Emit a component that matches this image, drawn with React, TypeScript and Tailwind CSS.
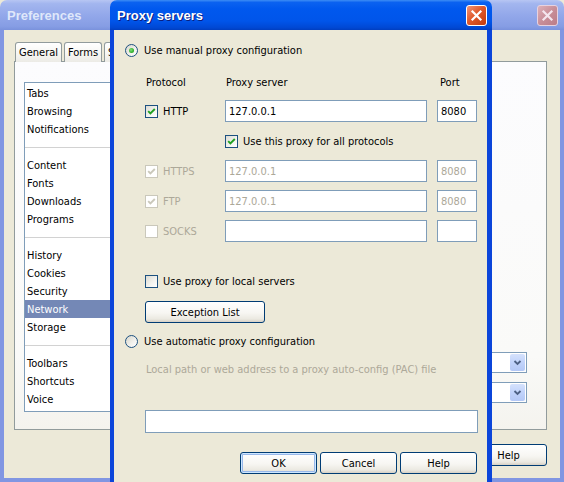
import React from "react";

function CloseBtn({ active }: { active: boolean }) {
  return (
    <div
      className={
        active
          ? "flex h-[21px] w-[21px] items-center justify-center rounded-[3px] border border-white bg-[linear-gradient(135deg,#f0957a_0%,#e05a2c_45%,#c23a0c_100%)]"
          : "flex h-[21px] w-[21px] items-center justify-center rounded-[3px] border border-[#e6d2e0] bg-[linear-gradient(135deg,#ddb1ba_0%,#c88e98_50%,#bb7c88_100%)]"
      }
    >
      <svg width="13" height="13" viewBox="0 0 13 13">
        <path
          d="M2.5 2.5 L10.5 10.5 M10.5 2.5 L2.5 10.5"
          stroke={active ? "#ffffff" : "#f4e6ee"}
          strokeWidth="2.2"
          strokeLinecap="square"
          fill="none"
        />
      </svg>
    </div>
  );
}

function Checkbox({ checked, disabled }: { checked?: boolean; disabled?: boolean }) {
  return (
    <div
      className={
        disabled
          ? "flex h-[13px] w-[13px] shrink-0 items-center justify-center border border-[#cac8bb] bg-white"
          : "flex h-[13px] w-[13px] shrink-0 items-center justify-center border border-[#1c5180] bg-[linear-gradient(135deg,#dcdbd3_0%,#f4f4f0_60%,#ffffff_100%)]"
      }
    >
      {checked && (
        <svg width="11" height="11" viewBox="0 0 11 11">
          <path
            d="M2.2 5.2 L4.4 7.4 L8.8 3"
            stroke={disabled ? "#cac8bb" : "#21a121"}
            strokeWidth="1.9"
            fill="none"
          />
        </svg>
      )}
    </div>
  );
}

function Radio({ checked }: { checked?: boolean }) {
  return (
    <div className="flex h-[13px] w-[13px] shrink-0 items-center justify-center rounded-full border border-[#1c5180] bg-[linear-gradient(135deg,#d8d6cb_0%,#f2f2ee_60%,#ffffff_100%)]">
      {checked && (
        <div className="h-[5px] w-[5px] rounded-full bg-[radial-gradient(circle_at_40%_40%,#7fe07b_0%,#31b12d_60%,#1d921d_100%)]" />
      )}
    </div>
  );
}

function TextInput({
  value,
  disabled,
  className,
}: {
  value?: string;
  disabled?: boolean;
  className: string;
}) {
  return (
    <div
      className={
        "flex shrink-0 items-center border border-[#7f9db9] bg-white px-[3px] " +
        (disabled ? "text-[#aca899] " : "text-black ") +
        className
      }
    >
      {value}
    </div>
  );
}

function XPButton({
  children,
  isDefault,
  className,
}: {
  children: React.ReactNode;
  isDefault?: boolean;
  className: string;
}) {
  return (
    <div
      className={
        "flex shrink-0 items-center justify-center rounded-[3px] border border-[#003c74] bg-[linear-gradient(to_bottom,#ffffff_0%,#f7f6f2_55%,#ebe9e1_85%,#d6d0c5_100%)] text-black " +
        (isDefault ? "shadow-[inset_0_0_0_1px_#cee7ff,inset_0_0_0_2px_#98b8ea] " : "") +
        className
      }
    >
      {children}
    </div>
  );
}

function Dropdown() {
  return (
    <div className="flex h-[21px] w-[200px] justify-end border border-[#7f9db9] bg-white p-px">
      <div className="flex w-[15px] items-center justify-center rounded-[2px] bg-[linear-gradient(to_bottom,#d6e2fc_0%,#c1d3fb_50%,#b4c8f6_100%)]">
        <svg width="9" height="7" viewBox="0 0 9 7">
          <path d="M1.5 2 L4.5 5 L7.5 2" stroke="#4d6185" strokeWidth="1.8" fill="none" />
        </svg>
      </div>
    </div>
  );
}

const groups: string[][] = [
  ["Tabs", "Browsing", "Notifications"],
  ["Content", "Fonts", "Downloads", "Programs"],
  ["History", "Cookies", "Security", "Network", "Storage"],
  ["Toolbars", "Shortcuts", "Voice"],
];

function Preferences() {
  return (
    <div className="flex h-full w-full flex-col">
      <div className="flex h-[30px] shrink-0 items-center justify-between rounded-t-[7px] bg-[linear-gradient(to_bottom,#b7c6f3_0%,#a3b6ef_12%,#93a8ea_50%,#869de4_88%,#7a92dc_100%)] pl-[7px] pr-[6px]">
        <span className="text-[13px] font-bold text-[#dfe7fa] [font-family:'Liberation_Sans',Arial,sans-serif]">
          Preferences
        </span>
        <CloseBtn active={false} />
      </div>
      <div className="flex flex-1 flex-col border-x-[4px] border-b-[4px] border-[#8196e2] bg-[#ece9d8] pl-[10px] pr-[13px] pt-[12px]">
        <div className="relative z-10 -mb-px flex gap-[2px] pl-[1px]">
          {["General", "Forms", "Search"].map((t) => (
            <div
              key={t}
              className="flex h-[20px] items-center rounded-t-[3px] border border-b-0 border-[#919b9c] bg-[linear-gradient(to_bottom,#ffffff_0%,#f7f7f4_50%,#ecebe6_100%)] px-[3px]"
            >
              {t}
            </div>
          ))}
        </div>
        <div className="flex h-[369px] border border-[#919b9c] bg-[linear-gradient(to_bottom,#fcfcfe_0%,#fafaf8_80%,#f4f3ee_100%)]">
          <div className="ml-[9px] mt-[20px] h-[330px] w-[160px] border border-[#7f9db9] bg-white pt-px">
            {groups.map((g, gi) => (
              <div key={gi}>
                {gi > 0 && (
                  <div className="flex h-[18px] items-center">
                    <div className="h-px w-full bg-[#d2d2d2]" />
                  </div>
                )}
                {g.map((item) => (
                  <div
                    key={item}
                    className={
                      item === "Network"
                        ? "flex h-[18px] items-center bg-[#7488b6] pl-[2px] text-white"
                        : "flex h-[18px] items-center pl-[2px] text-black"
                    }
                  >
                    {item}
                  </div>
                ))}
              </div>
            ))}
          </div>
          <div className="flex flex-1 flex-col items-end gap-[9px] pr-[19px] pt-[290px]">
            <Dropdown />
            <Dropdown />
          </div>
        </div>
        <div className="mt-[14px] flex justify-end gap-[3px]">
          <XPButton className="h-[22px] w-[77px]">Help</XPButton>
        </div>
      </div>
    </div>
  );
}

function ProxyDialog() {
  return (
    <div className="absolute left-[110px] top-0 z-20 flex h-[500px] w-[382px] flex-col">
      <div className="flex h-[30px] shrink-0 items-center justify-between rounded-t-[7px] bg-[linear-gradient(to_bottom,#3d8df5_0%,#0b62f0_8%,#0058ee_30%,#0055ea_70%,#0048d4_92%,#003ec0_100%)] pl-[7px] pr-[5px]">
        <span className="text-[13px] font-bold text-white [font-family:'Liberation_Sans',Arial,sans-serif] [text-shadow:1px_1px_0_#0a1e80]">
          Proxy servers
        </span>
        <CloseBtn active={true} />
      </div>
      <div className="flex flex-1 flex-col border-l-[4px] border-r-[5px] border-[#0b45da] bg-[#ece9d8] pl-[11px] pr-[10px]">
        <div className="mt-[14px] flex h-[13px] items-center gap-[6px]">
          <Radio checked />
          <span>Use manual proxy configuration</span>
        </div>

        <div className="ml-[20px] flex flex-col">
          <div className="mt-[14px] flex h-[22px] items-center">
            <span className="w-[80px] pl-px">Protocol</span>
            <span className="w-[212px] pl-px">Proxy server</span>
            <span className="pl-[3px]">Port</span>
          </div>

          <div className="mt-[7px] flex h-[22px] items-center">
            <div className="flex w-[80px] items-center gap-[5px]">
              <Checkbox checked />
              <span>HTTP</span>
            </div>
            <TextInput value="127.0.0.1" className="h-[22px] w-[202px]" />
            <TextInput value="8080" className="ml-[10px] h-[22px] w-[40px]" />
          </div>

          <div className="mt-[8px] flex h-[22px] items-center gap-[5px] pl-[80px]">
            <Checkbox checked />
            <span>Use this proxy for all protocols</span>
          </div>

          {[
            { p: "HTTPS", v: "127.0.0.1", port: "8080", c: true },
            { p: "FTP", v: "127.0.0.1", port: "8080", c: true },
            { p: "SOCKS", v: "", port: "", c: false },
          ].map((r) => (
            <div key={r.p} className="mt-[8px] flex h-[22px] items-center">
              <div className="flex w-[80px] items-center gap-[5px] text-[#aca899]">
                <Checkbox checked={r.c} disabled />
                <span>{r.p}</span>
              </div>
              <TextInput value={r.v} disabled className="h-[22px] w-[202px]" />
              <TextInput value={r.port} disabled className="ml-[10px] h-[22px] w-[40px]" />
            </div>
          ))}

          <div className="mt-[28px] flex h-[22px] items-center gap-[5px]">
            <Checkbox />
            <span>Use proxy for local servers</span>
          </div>

          <XPButton className="mt-[9px] h-[22px] w-[120px]">Exception List</XPButton>
        </div>

        <div className="mt-[7px] flex h-[22px] items-center gap-[6px]">
          <Radio />
          <span>Use automatic proxy configuration</span>
        </div>

        <div className="ml-[20px] flex flex-col">
          <div className="mt-[6px] flex h-[22px] items-center pl-px text-[#aca899]">
            Local path or web address to a proxy auto-config (PAC) file
          </div>
          <TextInput className="mt-[30px] h-[23px] w-[333px]" />
        </div>

        <div className="mt-[19px] flex justify-end gap-[3px]">
          <XPButton isDefault className="h-[22px] w-[77px]">OK</XPButton>
          <XPButton className="h-[22px] w-[77px]">Cancel</XPButton>
          <XPButton className="h-[22px] w-[77px]">Help</XPButton>
        </div>
      </div>
    </div>
  );
}

export default function App() {
  return (
    <div className="relative h-[482px] w-[564px] overflow-hidden bg-[#ece9d8] text-[11px] leading-none text-black [font-family:'DejaVu_Sans_Condensed','Liberation_Sans',sans-serif]">
      <Preferences />
      <ProxyDialog />
    </div>
  );
}
